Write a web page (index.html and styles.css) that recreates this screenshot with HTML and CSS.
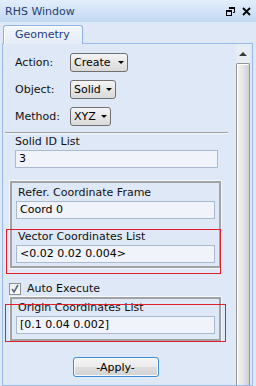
FILE: index.html
```html
<!DOCTYPE html>
<html lang="en">
<head>
    <meta charset="UTF-8">
    <meta name="viewport" content="width=device-width, initial-scale=1.0">
    <title>RHS Window</title>
    <link rel="stylesheet" href="styles.css">
</head>
<body>
    <div class="window">
        <div class="titlebar">
            <span class="title">RHS Window</span>
            <span class="win-icons">
                <svg class="icon" width="9" height="9" viewBox="0 0 9 9">
                    <path d="M3 0.5h5.5v5h-1.5" fill="none" stroke="#000" stroke-width="1"/>
                    <rect x="3" y="0" width="6" height="2" fill="#000"/>
                    <rect x="0.5" y="3.5" width="5" height="5" fill="none" stroke="#000" stroke-width="1"/>
                    <rect x="0" y="3" width="6" height="2" fill="#000"/>
                </svg>
                <svg class="icon" width="9" height="9" viewBox="0 0 9 9">
                    <path d="M1 1L8 8M8 1L1 8" stroke="#000" stroke-width="1.8"/>
                </svg>
            </span>
        </div>

        <div class="tabstrip">
            <div class="tab">Geometry</div>
        </div>

        <div class="panel">
            <div class="content">
                <div class="field-row">
                    <span class="row-label">Action:</span>
                    <span class="dropdown dd-wide"><span>Create</span><span class="caret"></span></span>
                </div>
                <div class="field-row">
                    <span class="row-label">Object:</span>
                    <span class="dropdown"><span>Solid</span><span class="caret"></span></span>
                </div>
                <div class="field-row">
                    <span class="row-label">Method:</span>
                    <span class="dropdown"><span>XYZ</span><span class="caret"></span></span>
                </div>

                <div class="separator"></div>

                <div class="field field-plain">
                    <div class="field-label">Solid ID List</div>
                    <div class="input">3</div>
                </div>

                <div class="group">
                    <div class="field">
                        <div class="field-label">Refer. Coordinate Frame</div>
                        <div class="input">Coord 0</div>
                    </div>
                    <div class="field field-spaced marked mark-vector">
                        <div class="field-label">Vector Coordinates List</div>
                        <div class="input">&lt;0.02 0.02 0.004&gt;</div>
                    </div>
                </div>

                <div class="check-row">
                    <span class="checkbox">
                        <svg width="10" height="10" viewBox="0 0 10 10">
                            <path d="M2 5l2 3l4-7" fill="none" stroke="#5a6b80" stroke-width="1.6"/>
                        </svg>
                    </span>
                    <span>Auto Execute</span>
                </div>

                <div class="group group-origin">
                    <div class="field marked mark-origin">
                        <div class="field-label">Origin Coordinates List</div>
                        <div class="input">[0.1 0.04 0.002]</div>
                    </div>
                </div>

                <div class="actions">
                    <button class="btn">-Apply-</button>
                </div>
            </div>

            <div class="scrollbar">
                <div class="scroll-up"><span class="up-arrow"></span></div>
                <div class="thumb"></div>
            </div>
        </div>
    </div>
</body>
</html>
```

FILE: styles.css
```css
* {
    margin: 0;
    padding: 0;
    box-sizing: border-box;
}

body {
    font-family: 'DejaVu Sans', Verdana, sans-serif;
    font-size: 11px;
    color: #111;
    background: #dfe8f6;
}

.window {
    width: 256px;
    height: 386px;
    overflow: hidden;
    background: #dfe8f6;
    display: flex;
    flex-direction: column;
}

/* title bar */
.titlebar {
    height: 22px;
    flex-shrink: 0;
    display: flex;
    align-items: center;
    justify-content: space-between;
    padding: 0 5px 0 5px;
    background: linear-gradient(to bottom, #e3eefb, #c2d8f4);
}

.title {
    color: #1f3f74;
}

.win-icons {
    display: flex;
    gap: 7px;
    margin-top: 1px;
}

.icon {
    display: block;
}

/* tabs */
.tabstrip {
    height: 21px;
    flex-shrink: 0;
    padding: 3px 0 0 3px;
}

.tab {
    position: relative;
    width: 80px;
    height: 19px;
    border: 1px solid #8db2e3;
    border-bottom: none;
    border-radius: 3px 3px 0 0;
    background: linear-gradient(to bottom, #f3f7fd, #e4ecf8);
    box-shadow: inset 1px 1px 0 #fff;
    color: #1c3f78;
    padding: 2px 0 0 11px;
}

/* panel */
.panel {
    flex: 1;
    display: flex;
    margin-left: 2px;
    width: 251px;
    border: 1px solid #99bbe8;
    padding-right: 2px;
    overflow: hidden;
}

.content {
    flex: 1;
    padding: 9px 14px 0 6px;
}

.field-row {
    display: flex;
    align-items: center;
    height: 19px;
    margin-bottom: 8px;
}

.field-row:nth-child(3) {
    margin-bottom: 0;
}

.row-label {
    width: 61px;
    padding-left: 6px;
}

.dropdown {
    display: inline-flex;
    align-items: center;
    justify-content: space-between;
    gap: 5px;
    height: 19px;
    padding: 0 3px 0 3px;
    border: 1px solid #707070;
    border-radius: 3px;
    background: linear-gradient(to bottom, #f5f5f5, #e6e6e6 50%, #dadada);
    color: #000;
}

.dd-wide {
    width: 58px;
}

.caret {
    width: 0;
    height: 0;
    border-left: 3px solid transparent;
    border-right: 3px solid transparent;
    border-top: 3px solid #000;
}

.separator {
    height: 2px;
    margin: 6px -6px 1px -4px;
    border-top: 1px solid #a0a0a0;
    border-bottom: 1px solid #f4f7fb;
}

/* text fields */
.field {
    position: relative;
}

.field-plain {
    padding: 0 4px 0 6px;
}

.field-label {
    height: 14px;
    line-height: 14px;
    padding-left: 2px;
    margin-bottom: 1px;
}

.field-plain .field-label {
    padding-left: 0;
}

.input {
    height: 18px;
    line-height: 16px;
    border: 1px solid #a9b9d0;
    background: #f0f4fa;
    padding-left: 3px;
    color: #000;
}

.field-spaced {
    margin-top: 11px;
}

/* group boxes */
.group {
    margin: 13px 1px 0 1px;
    border: 2px solid #a2a2a2;
    box-shadow: 0 0 0 1px #f5f8fc;
    padding: 3px 4px 3px 4px;
}

.group-origin {
    margin-top: 2px;
    padding-top: 2px;
    padding-bottom: 5px;
}

/* red markers */
.marked::after {
    content: "";
    position: absolute;
    border: 1px solid #e0202a;
}

.mark-vector::after {
    top: -1px;
    left: -10px;
    right: -6px;
    bottom: -11px;
}

.mark-origin::after {
    top: 3px;
    left: -11px;
    right: -11px;
    bottom: -8px;
}

/* checkbox */
.check-row {
    display: flex;
    align-items: center;
    gap: 6px;
    margin-top: 14px;
    height: 13px;
}

.checkbox {
    width: 12px;
    height: 12px;
    border: 1px solid #8e8f8f;
    background: linear-gradient(to bottom, #eef0f2, #fafbfc);
    display: flex;
    align-items: center;
    justify-content: center;
}

.checkbox svg {
    display: block;
}

/* button */
.actions {
    display: flex;
    justify-content: center;
    margin-top: 16px;
}

.btn {
    width: 86px;
    height: 20px;
    border: 1px solid #3c8fd0;
    border-radius: 3px;
    background: linear-gradient(to bottom, #f4f4f4, #ececec 50%, #dedede 50%, #d2d2d2);
    box-shadow: inset 0 0 0 1px #f8fcff;
    font-family: 'DejaVu Sans', Verdana, sans-serif;
    font-size: 11px;
    color: #000;
}

/* scrollbar */
.scrollbar {
    width: 14px;
    display: flex;
    flex-direction: column;
    background: #e8edf4;
}

.scroll-up {
    height: 19px;
    display: flex;
    justify-content: center;
    padding-top: 8px;
}

.up-arrow {
    width: 0;
    height: 0;
    border-left: 4px solid transparent;
    border-right: 4px solid transparent;
    border-bottom: 4px solid #3a3a3a;
}

.thumb {
    flex: 1;
    border: 1px solid #959595;
    border-bottom: none;
    border-radius: 2px 2px 0 0;
    background: linear-gradient(to right, #f2f2f2, #e6e6e6 50%, #cfcfcf);
    box-shadow: inset 1px 1px 0 #fff;
}
```
